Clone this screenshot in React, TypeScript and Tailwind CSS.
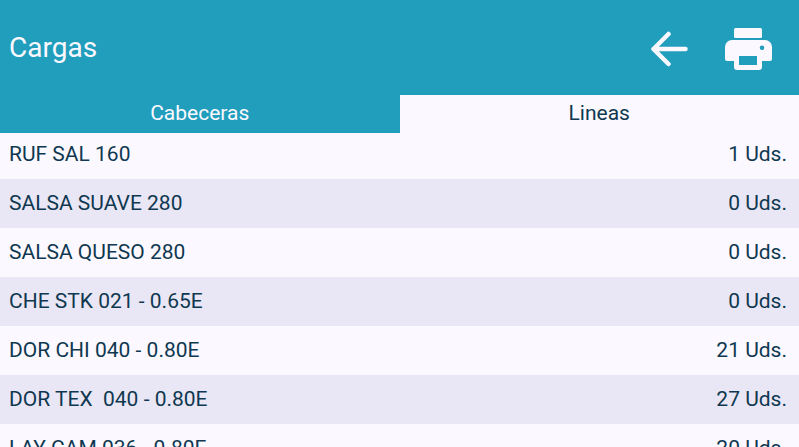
const rows = [
  ["RUF SAL 160", "1 Uds."],
  ["SALSA SUAVE 280", "0 Uds."],
  ["SALSA QUESO 280", "0 Uds."],
  ["CHE STK 021 - 0.65E", "0 Uds."],
  ["DOR CHI 040 - 0.80E", "21 Uds."],
  ["DOR TEX  040 - 0.80E", "27 Uds."],
  ["LAY CAM 036 - 0.80E", "20 Uds."],
];

export default function App() {
  return (
    <div className="h-[447px] w-[799px] overflow-hidden bg-[#fbf9ff] font-['Roboto',sans-serif]">
      <header className="flex h-[95px] items-center justify-between bg-[#229ebd] pl-[9px] pr-[27px] text-[#fbf9ff]">
        <h1 className="text-[28px] leading-none">Cargas</h1>
        <div className="flex items-center gap-[37px] pt-[3px]">
          <svg width="37" height="36" viewBox="0 0 37 36" fill="none" stroke="currentColor" strokeWidth="4.5" strokeLinecap="round" strokeLinejoin="round">
            <path d="M34.500 18H2.500M17.500 3 2.500 18l15 15" />
          </svg>
          <svg width="47" height="42" viewBox="0 0 47 42" fill="currentColor">
            <rect x="9" y="0" width="28" height="10" rx="1.500" />
            <path fillRule="evenodd" d="M7 12h33a7 7 0 0 1 7 7v12a2 2 0 0 1-2 2h-8v6a3 3 0 0 1-3 3H12a3 3 0 0 1-3-3v-6H2a2 2 0 0 1-2-2V19a7 7 0 0 1 7-7Zm7 16v9h18v-9Zm23-10.500a2.300 2.300 0 1 0 0 4.600 2.300 2.300 0 0 0 0-4.600Z" />
          </svg>
        </div>
      </header>
      <nav className="flex h-[38px] text-[21px]">
        <div className="flex flex-1 items-center justify-center bg-[#229ebd] text-[#fbf9ff]">Cabeceras</div>
        <div className="flex flex-1 items-center justify-center text-[#0f3850]">Lineas</div>
      </nav>
      <ul className="text-[21px] text-[#0f3850]">
        {rows.map(([name, qty], i) => (
          <li key={name} className={`flex justify-between whitespace-pre pl-[9px] pr-3 ${i === 0 ? "h-[46px] pt-[6px]" : "h-[49px] pt-[9px]"} ${i % 2 === 1 ? "bg-[#e9e7f5]" : ""}`}>
            <span>{name}</span>
            <span>{qty}</span>
          </li>
        ))}
      </ul>
    </div>
  );
}
